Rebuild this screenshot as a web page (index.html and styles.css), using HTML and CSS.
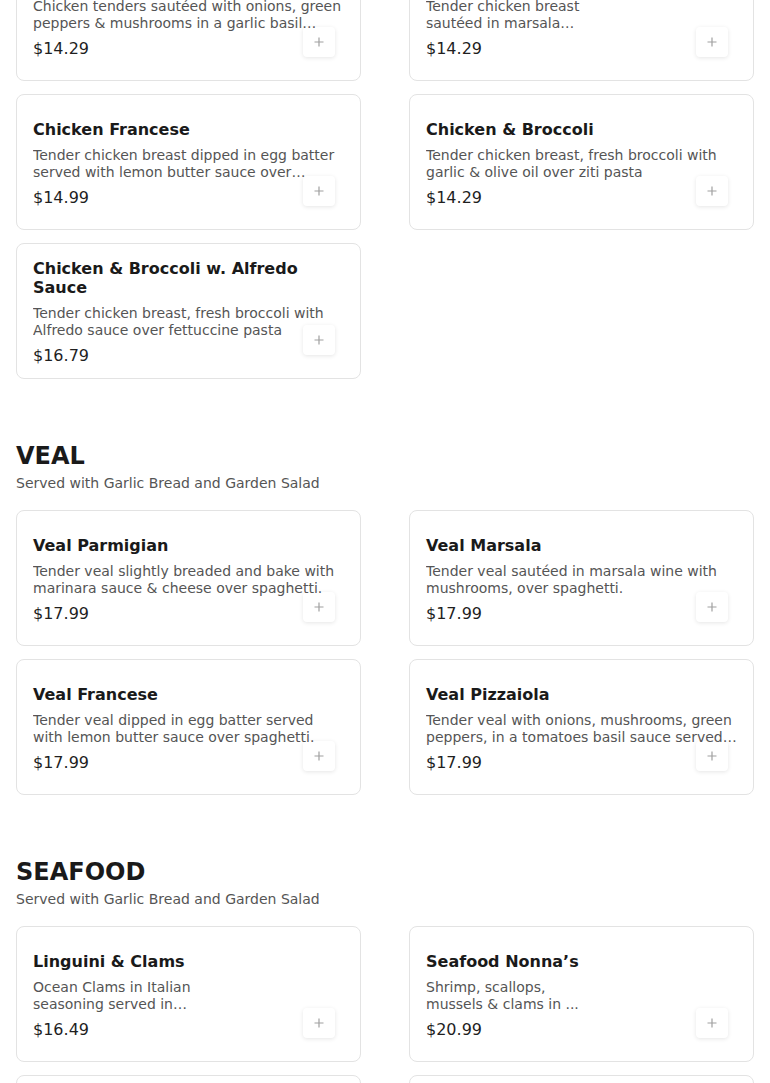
FILE: index.html
```html
<!DOCTYPE html>
<html>
<head>
<meta charset="utf-8">
<link rel="stylesheet" href="styles.css">
</head>
<body>
<div class="page">
  <section class="section first">
    <div class="grid">
      <div class="card">
        <div class="info">
          <h3 class="title">Chicken Scarpariello</h3>
          <p class="desc">Chicken tenders sautéed with onions, green peppers &amp; mushrooms in a garlic basil sauce over penne pasta</p>
          <div class="price">$14.29</div>
        </div>
        <button class="add"><svg width="10" height="10" viewBox="0 0 10 10"><path d="M5 0.5V9.5M0.5 5H9.5" stroke="#a0a0a0" stroke-width="1.2"/></svg></button>
      </div>
      <div class="card">
        <div class="info">
          <h3 class="title">Chicken Marsala</h3>
          <p class="desc narrow">Tender chicken breast sautéed in marsala wine with mushrooms</p>
          <div class="price">$14.29</div>
        </div>
        <button class="add"><svg width="10" height="10" viewBox="0 0 10 10"><path d="M5 0.5V9.5M0.5 5H9.5" stroke="#a0a0a0" stroke-width="1.2"/></svg></button>
      </div>
      <div class="card">
        <div class="info">
          <h3 class="title">Chicken Francese</h3>
          <p class="desc">Tender chicken breast dipped in egg batter served with lemon butter sauce over spaghetti</p>
          <div class="price">$14.99</div>
        </div>
        <button class="add"><svg width="10" height="10" viewBox="0 0 10 10"><path d="M5 0.5V9.5M0.5 5H9.5" stroke="#a0a0a0" stroke-width="1.2"/></svg></button>
      </div>
      <div class="card">
        <div class="info">
          <h3 class="title">Chicken &amp; Broccoli</h3>
          <p class="desc">Tender chicken breast, fresh broccoli with garlic &amp; olive oil over ziti pasta</p>
          <div class="price">$14.29</div>
        </div>
        <button class="add"><svg width="10" height="10" viewBox="0 0 10 10"><path d="M5 0.5V9.5M0.5 5H9.5" stroke="#a0a0a0" stroke-width="1.2"/></svg></button>
      </div>
      <div class="card">
        <div class="info">
          <h3 class="title">Chicken &amp; Broccoli w. Alfredo Sauce</h3>
          <p class="desc">Tender chicken breast, fresh broccoli with Alfredo sauce over fettuccine pasta</p>
          <div class="price">$16.79</div>
        </div>
        <button class="add"><svg width="10" height="10" viewBox="0 0 10 10"><path d="M5 0.5V9.5M0.5 5H9.5" stroke="#a0a0a0" stroke-width="1.2"/></svg></button>
      </div>
    </div>
  </section>

  <section class="section">
    <h2 class="sec-title">VEAL</h2>
    <p class="sec-sub">Served with Garlic Bread and Garden Salad</p>
    <div class="grid">
      <div class="card">
        <div class="info">
          <h3 class="title">Veal Parmigian</h3>
          <p class="desc">Tender veal slightly breaded and bake with marinara sauce &amp; cheese over spaghetti.</p>
          <div class="price">$17.99</div>
        </div>
        <button class="add"><svg width="10" height="10" viewBox="0 0 10 10"><path d="M5 0.5V9.5M0.5 5H9.5" stroke="#a0a0a0" stroke-width="1.2"/></svg></button>
      </div>
      <div class="card">
        <div class="info">
          <h3 class="title">Veal Marsala</h3>
          <p class="desc">Tender veal sautéed in marsala wine with mushrooms, over spaghetti.</p>
          <div class="price">$17.99</div>
        </div>
        <button class="add"><svg width="10" height="10" viewBox="0 0 10 10"><path d="M5 0.5V9.5M0.5 5H9.5" stroke="#a0a0a0" stroke-width="1.2"/></svg></button>
      </div>
      <div class="card">
        <div class="info">
          <h3 class="title">Veal Francese</h3>
          <p class="desc">Tender veal dipped in egg batter served with lemon butter sauce over spaghetti.</p>
          <div class="price">$17.99</div>
        </div>
        <button class="add"><svg width="10" height="10" viewBox="0 0 10 10"><path d="M5 0.5V9.5M0.5 5H9.5" stroke="#a0a0a0" stroke-width="1.2"/></svg></button>
      </div>
      <div class="card">
        <div class="info">
          <h3 class="title">Veal Pizzaiola</h3>
          <p class="desc">Tender veal with onions, mushrooms, green peppers, in a tomatoes basil sauce served over spaghetti.</p>
          <div class="price">$17.99</div>
        </div>
        <button class="add"><svg width="10" height="10" viewBox="0 0 10 10"><path d="M5 0.5V9.5M0.5 5H9.5" stroke="#a0a0a0" stroke-width="1.2"/></svg></button>
      </div>
    </div>
  </section>

  <section class="section">
    <h2 class="sec-title">SEAFOOD</h2>
    <p class="sec-sub">Served with Garlic Bread and Garden Salad</p>
    <div class="grid">
      <div class="card">
        <div class="info">
          <h3 class="title">Linguini &amp; Clams</h3>
          <p class="desc narrow">Ocean Clams in Italian seasoning served in white or red sauce</p>
          <div class="price">$16.49</div>
        </div>
        <button class="add"><svg width="10" height="10" viewBox="0 0 10 10"><path d="M5 0.5V9.5M0.5 5H9.5" stroke="#a0a0a0" stroke-width="1.2"/></svg></button>
      </div>
      <div class="card">
        <div class="info">
          <h3 class="title">Seafood Nonna’s</h3>
          <p class="desc narrow">Shrimp, scallops, mussels &amp; clams in ...</p>
          <div class="price">$20.99</div>
        </div>
        <button class="add"><svg width="10" height="10" viewBox="0 0 10 10"><path d="M5 0.5V9.5M0.5 5H9.5" stroke="#a0a0a0" stroke-width="1.2"/></svg></button>
      </div>
      <div class="card">
        <div class="info">
          <h3 class="title">Shrimp Scampi</h3>
          <p class="desc">Shrimp sautéed in garlic, lemon &amp; white wine over linguini</p>
          <div class="price">$18.99</div>
        </div>
        <button class="add"><svg width="10" height="10" viewBox="0 0 10 10"><path d="M5 0.5V9.5M0.5 5H9.5" stroke="#a0a0a0" stroke-width="1.2"/></svg></button>
      </div>
      <div class="card">
        <div class="info">
          <h3 class="title">Shrimp Parmigian</h3>
          <p class="desc">Breaded shrimp baked with marinara sauce &amp; cheese over spaghetti</p>
          <div class="price">$18.99</div>
        </div>
        <button class="add"><svg width="10" height="10" viewBox="0 0 10 10"><path d="M5 0.5V9.5M0.5 5H9.5" stroke="#a0a0a0" stroke-width="1.2"/></svg></button>
      </div>
    </div>
  </section>
</div>
</body>
</html>
```

FILE: styles.css
```css
* { box-sizing: border-box; }
html, body { margin: 0; padding: 0; background: #ffffff; }
body {
  font-family: "DejaVu Sans", Verdana, sans-serif;
  color: #1a1a1a;
  overflow: hidden;
}
.page {
  padding: 0 16px;
  margin-top: -55px;
}
.section { margin-top: 63px; }
.section.first { margin-top: 0; }
.sec-title {
  margin: 0;
  font-size: 24px;
  font-weight: bold;
  line-height: 28px;
  color: #1a1a1a;
}
.sec-sub {
  margin: 5px 0 19px;
  font-size: 14px;
  line-height: 16px;
  color: #555555;
}
.grid {
  display: grid;
  grid-template-columns: 345px 345px;
  column-gap: 48px;
  row-gap: 13px;
}
.card {
  position: relative;
  height: 136px;
  border: 1px solid #e3e3e3;
  border-radius: 8px;
  padding: 2px 16px 0;
  display: flex;
  align-items: center;
  background: #fff;
}
.info {
  position: relative;
  z-index: 2;
  display: flex;
  flex-direction: column;
  width: 100%;
}
.title {
  margin: 0 0 8px;
  font-size: 16px;
  line-height: 19px;
  font-weight: bold;
  color: #1a1a1a;
}
.desc {
  margin: 0 0 7px;
  font-size: 14px;
  line-height: 17px;
  color: #555555;
  display: -webkit-box;
  -webkit-line-clamp: 2;
  -webkit-box-orient: vertical;
  overflow: hidden;
}
.desc.narrow { max-width: 162px; }
.price {
  font-size: 16px;
  line-height: 19px;
  color: #1f1f1f;
}
.add {
  position: absolute;
  z-index: 1;
  right: 25px;
  bottom: 23px;
  width: 32px;
  height: 30px;
  border: none;
  border-radius: 4px;
  background: #fff;
  box-shadow: 0 1px 4px rgba(0,0,0,0.10);
  display: flex;
  align-items: center;
  justify-content: center;
  padding: 0;
}
```
